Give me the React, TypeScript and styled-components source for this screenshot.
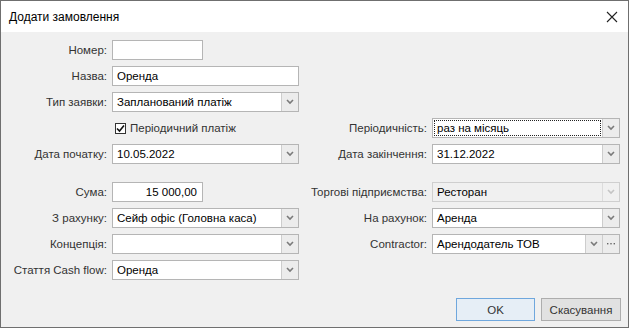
import React from "react";
import styled, { createGlobalStyle } from "styled-components";

const GlobalStyle = createGlobalStyle`
    html, body {
        margin: 0;
        padding: 0;
        background: #ffffff;
    }
    body {
        width: 629px;
        height: 328px;
        overflow: hidden;
        font-family: "Liberation Sans", Arial, sans-serif;
        font-size: 11.5px;
    }
`;

const Chevron = ({ muted }: { muted?: boolean }) => (
    <svg width="8" height="6" viewBox="0 0 8 6">
        <path d="M1 1 L4 4 L7 1" fill="none" stroke={muted ? "#c4c4c4" : "#7a7a7a"} strokeWidth="1.6" />
    </svg>
);

const Dots = () => (
    <svg width="10" height="4" viewBox="0 0 10 4">
        <rect x="1" y="1" width="1.4" height="1.4" fill="#666" />
        <rect x="4.3" y="1" width="1.4" height="1.4" fill="#666" />
        <rect x="7.6" y="1" width="1.4" height="1.4" fill="#666" />
    </svg>
);

const Combo = ({ value, muted, focus, more }: { value: string; muted?: boolean; focus?: boolean; more?: boolean }) => (
    <Field muted={muted}>
        <Value focus={focus}>{value}</Value>
        <DropButton muted={muted}><Chevron muted={muted} /></DropButton>
        {more && <DropButton><Dots /></DropButton>}
    </Field>
);

const App = () => {
    return (
        <>
            <GlobalStyle />
            <Window>
                <TitleBar>
                    <Title>Додати замовлення</Title>
                    <svg width="12" height="12" viewBox="0 0 12 12">
                        <path d="M1 1 L11 11 M11 1 L1 11" stroke="#222" strokeWidth="1.1" />
                    </svg>
                </TitleBar>
                <Body>
                    <Form>
                        <Label>Номер:</Label>
                        <Field short><Value /></Field>
                        <Empty />
                        <Empty />

                        <Label>Назва:</Label>
                        <Field><Value>Оренда</Value></Field>
                        <Empty />
                        <Empty />

                        <Label>Тип заявки:</Label>
                        <Combo value="Запланований платіж" />
                        <Empty />
                        <Empty />

                        <Empty />
                        <CheckRow>
                            <CheckBox>
                                <svg width="9" height="9" viewBox="0 0 9 9">
                                    <path d="M1 4.5 L3.5 7 L8 1.5" fill="none" stroke="#111" strokeWidth="1.6" />
                                </svg>
                            </CheckBox>
                            Періодичний платіж
                        </CheckRow>
                        <Label>Періодичність:</Label>
                        <Combo value="раз на місяць" focus />

                        <Label>Дата початку:</Label>
                        <Combo value="10.05.2022" />
                        <Label>Дата закінчення:</Label>
                        <Combo value="31.12.2022" />

                        <Spacer />

                        <Label>Сума:</Label>
                        <Field short><Value right>15 000,00</Value></Field>
                        <Label>Торгові підприємства:</Label>
                        <Combo value="Ресторан" muted />

                        <Label>З рахунку:</Label>
                        <Combo value="Сейф офіс (Головна каса)" />
                        <Label>На рахунок:</Label>
                        <Combo value="Аренда" />

                        <Label>Концепція:</Label>
                        <Combo value="" />
                        <Label>Contractor:</Label>
                        <Combo value="Арендодатель ТОВ" more />

                        <Label>Стаття Cash flow:</Label>
                        <Combo value="Оренда" />
                        <Empty />
                        <Empty />
                    </Form>
                    <Footer>
                        <Button primary>OK</Button>
                        <Button>Скасування</Button>
                    </Footer>
                </Body>
            </Window>
        </>
    );
};

export default App;

const Window = styled.div`
    width: 629px;
    height: 328px;
    box-sizing: border-box;
    border: 1px solid #6f6f6f;
    background: #ffffff;
    display: flex;
    flex-direction: column;
`;

const TitleBar = styled.div`
    height: 31px;
    flex-shrink: 0;
    display: flex;
    align-items: center;
    justify-content: space-between;
    padding: 1px 10px 0 8px;
    box-sizing: border-box;
    background: #ffffff;
`;

const Title = styled.div`
    font-size: 12px;
    color: #000;
`;

const Body = styled.div`
    flex: 1;
    display: flex;
    flex-direction: column;
    background: #f0f0f0;
    padding: 7px 7px 6px 3px;
    border-top: 1px solid #f0f0f0;
`;

const Form = styled.div`
    display: grid;
    grid-template-columns: 103px 187px 123px 188px;
    grid-template-rows: repeat(5, 20px) 6px repeat(4, 20px);
    column-gap: 5px;
    row-gap: 6px;
`;

const Label = styled.div`
    display: flex;
    align-items: center;
    justify-content: flex-end;
    color: #333;
    white-space: nowrap;
`;

const Empty = styled.div``;

const Spacer = styled.div`
    grid-column: 1 / -1;
`;

const Field = styled.div<{ short?: boolean; muted?: boolean }>`
    display: flex;
    box-sizing: border-box;
    width: ${props => (props.short ? "91px" : "100%")};
    height: 20px;
    border: 1px solid ${props => (props.muted ? "#cfcfcf" : "#b5b5b5")};
    background: ${props => (props.muted ? "#f0f0f0" : "#ffffff")};
`;

const Value = styled.div<{ right?: boolean; focus?: boolean }>`
    flex: 1;
    display: flex;
    align-items: center;
    justify-content: ${props => (props.right ? "flex-end" : "flex-start")};
    padding: ${props => (props.focus ? "0 3px" : "0 5px 0 4px")};
    margin: ${props => (props.focus ? "1px" : "0")};
    outline: ${props => (props.focus ? "1px dotted #222" : "none")};
    outline-offset: -1px;
    color: #000;
    white-space: nowrap;
    overflow: hidden;
`;

const DropButton = styled.div<{ muted?: boolean }>`
    width: 16px;
    display: flex;
    align-items: center;
    justify-content: center;
    border-left: 1px solid ${props => (props.muted ? "#dcdcdc" : "#cdcdcd")};
    background: ${props => (props.muted ? "#f0f0f0" : "#ececec")};
`;

const CheckRow = styled.div`
    display: flex;
    align-items: center;
    gap: 4px;
    padding-left: 3px;
    color: #333;
`;

const CheckBox = styled.div`
    width: 11px;
    height: 11px;
    box-sizing: border-box;
    border: 1px solid #333;
    background: #fff;
    display: flex;
    align-items: center;
    justify-content: center;
`;

const Footer = styled.div`
    margin-top: auto;
    display: flex;
    justify-content: flex-end;
    gap: 6px;
`;

const Button = styled.div<{ primary?: boolean }>`
    width: ${props => (props.primary ? "79px" : "80px")};
    height: 23px;
    box-sizing: border-box;
    display: flex;
    align-items: center;
    justify-content: center;
    border: 1px solid ${props => (props.primary ? "#6fa7dd" : "#adadad")};
    background: ${props => (props.primary ? "#e6eef6" : "#e1e1e1")};
    color: #333;
`;
